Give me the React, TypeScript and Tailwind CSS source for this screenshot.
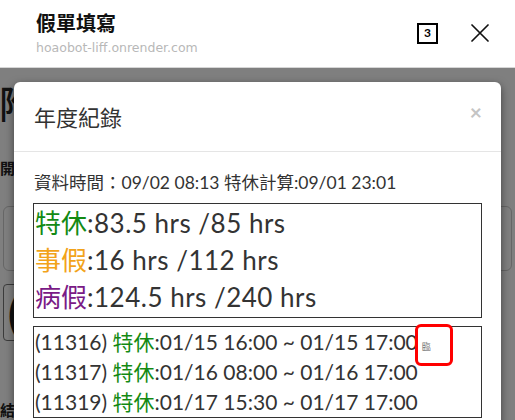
import React from 'react';

const cjk = "'Lato', 'Noto Sans CJK TC', sans-serif";

const summary = [
  { label: '特休', color: 'text-[#138a13]', value: ':83.5 hrs /85 hrs' },
  { label: '事假', color: 'text-[#f2a31b]', value: ':16 hrs /112 hrs' },
  { label: '病假', color: 'text-[#7a1a86]', value: ':124.5 hrs /240 hrs' },
];

const records = [
  { id: '11316', range: ':01/15 16:00 ~ 01/15 17:00', tag: '臨' },
  { id: '11317', range: ':01/16 08:00 ~ 01/16 17:00' },
  { id: '11319', range: ':01/17 15:30 ~ 01/17 17:00' },
];

function TabIcon() {
  return (
    <div className="w-[21px] h-[21px] border-2 border-black flex items-center justify-center text-[12px] font-bold leading-none text-black">
      3
    </div>
  );
}

function CloseIcon() {
  return (
    <svg width="18" height="18" viewBox="0 0 18 18" fill="none" stroke="#111" strokeWidth="1.7" strokeLinecap="round">
      <path d="M1 1 L17 17 M17 1 L1 17" />
    </svg>
  );
}

export default function App() {
  return (
    <div className="w-[515px] h-[420px] overflow-hidden flex flex-col bg-white" style={{ fontFamily: cjk }}>
      {/* LIFF header */}
      <div className="h-[68px] shrink-0 flex items-center pl-[36px] pr-[26px] border-b border-[#d6d6d6] bg-white">
        <div className="flex-1 flex flex-col">
          <div className="text-[20px] font-bold text-[#111] leading-[24px]">假單填寫</div>
          <div className="text-[12.5px] text-[#b8b8b8] leading-[18px] mt-[4px]" style={{ fontFamily: "'DejaVu Sans', sans-serif" }}>
            hoaobot-liff.onrender.com
          </div>
        </div>
        <div className="flex items-center gap-[33px] -mt-[1px]">
          <TabIcon />
          <CloseIcon />
        </div>
      </div>

      {/* page behind the modal */}
      <div className="relative flex-1">
        <div className="flex flex-col px-[3px] pt-[11px] text-[#222]">
          <div className="text-[38px] leading-[48px] font-medium -ml-[4px]">附件</div>
          <div className="text-[15px] font-bold leading-[22px] mt-[30px] -ml-[3px]">開始日期</div>
          <div className="h-[65px] mt-[27px] border border-[#ccc] rounded-[6px]" />
          <div className="h-[57px] w-[300px] mt-[13px] border border-[#777] rounded-[4px] flex items-center text-[44px] font-bold pl-[4px]">(</div>
          <div className="text-[15px] font-bold leading-[22px] mt-[58px] -ml-[3px]">結束日期</div>
        </div>

        {/* overlay */}
        <div className="absolute inset-0 bg-black/50" />

        {/* modal */}
        <div className="absolute left-[14px] top-[14px] w-[487px] h-[420px] bg-white rounded-[6px] shadow-[0_3px_9px_rgba(0,0,0,0.5)]">
          <div className="h-[70px] flex items-center justify-between pl-[20px] pr-[19px] border-b border-[#e5e5e5]">
            <div className="text-[22px] text-[#333] leading-[30px] pt-[2px]">年度紀錄</div>
            <div className="text-[21px] font-bold text-[#c4c4c4] leading-none -mt-[10px]">×</div>
          </div>
          <div className="px-[19px] pt-[19px] text-[#333]">
            <div className="text-[17.5px] leading-[24px] pl-[1px] whitespace-nowrap">資料時間：09/02 08:13 特休計算:09/01 23:01</div>
            <div className="mt-[8px] border border-[#333] pl-[1px] py-[1px]">
              {summary.map((s) => (
                <div key={s.label} className="text-[26px] leading-[37px] whitespace-nowrap">
                  <span className={s.color}>{s.label}</span>
                  <span className="tracking-[0.5px]">{s.value}</span>
                </div>
              ))}
            </div>
            <div className="relative mt-[8px] border border-[#333] pl-[1px]">
              {records.map((r) => (
                <div key={r.id} className="h-[30px] text-[21px] leading-[30px] whitespace-nowrap flex items-center">
                  <span>({r.id})&nbsp;</span>
                  <span className="text-[#138a13]">特休</span>
                  <span>{r.range}</span>
                  {r.tag && <span className="inline-block text-[9px] leading-none text-[#777] ml-[4px] mt-[8px]">{r.tag}</span>}
                </div>
              ))}
              <div className="absolute left-[381px] -top-[3px] w-[38px] h-[42px] border-[3px] border-[#f00] rounded-[6px]" />
            </div>
          </div>
        </div>
      </div>
    </div>
  );
}
